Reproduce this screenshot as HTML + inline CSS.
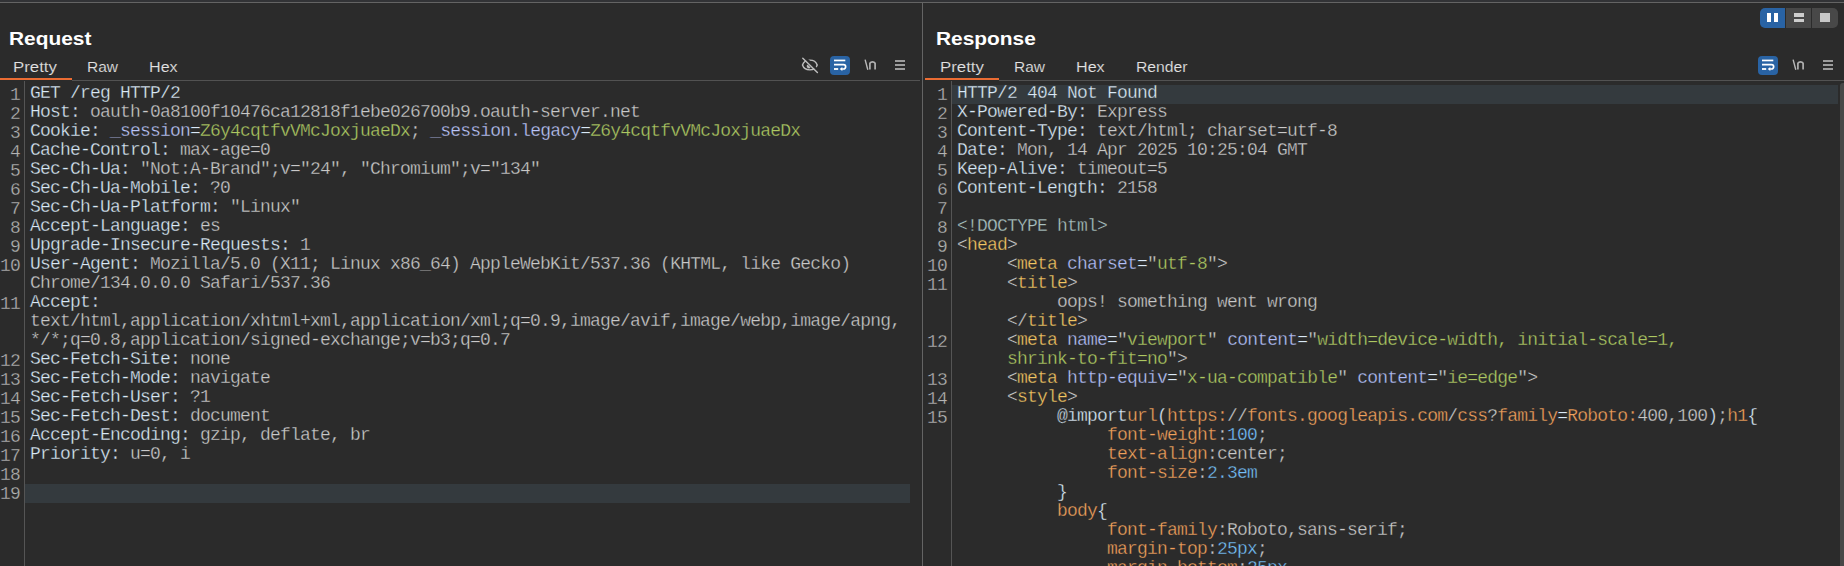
<!DOCTYPE html>
<html><head><meta charset="utf-8">
<style>
html,body{margin:0;padding:0;}
body{width:1844px;height:566px;overflow:hidden;background:#2b2b2b;position:relative;font-family:"Liberation Sans",sans-serif;}
.abs{position:absolute;}
#topstrip{left:0;top:0;width:1844px;height:2px;background:#323336;}
#topline{left:0;top:2px;width:1844px;height:1px;background:#646464;}
#vdiv{left:922px;top:2px;width:1px;height:564px;background:#646464;}
.title{font-weight:bold;font-size:18px;color:#fff;white-space:nowrap;line-height:20px;transform-origin:0 0;transform:scaleX(1.16);}
.tab{font-size:15.5px;color:#e2e2e2;-webkit-text-stroke:0.15px #2b2b2b;white-space:nowrap;line-height:18px;transform-origin:0 0;}
.hl{position:absolute;background:#343a3e;height:19px;}
.hline{position:absolute;height:1px;background:#525252;}
.orange{position:absolute;height:2px;background:#ea6c33;}
.gut{position:absolute;width:1px;background:#555;}
.code{position:absolute;font-family:"Liberation Mono",monospace;font-size:18px;letter-spacing:-0.8px;line-height:19px;white-space:pre;color:#c9c9c9;-webkit-text-stroke:0.3px #2b2b2b;}
.ln{position:absolute;font-family:"Liberation Mono",monospace;font-size:18px;letter-spacing:-0.8px;line-height:19px;white-space:pre;color:#b4b4b4;text-align:right;-webkit-text-stroke:0.3px #2b2b2b;}
.k{color:#dae9f7;}
.ck{color:#bcc6fa;}
.cv{color:#adc862;}
.p{color:#a9c1c0;}
.tg{color:#f2c562;}
.at{color:#b4c0fa;}
.eq{color:#dae9f7;}
.sv{color:#adc862;}
.or{color:#f0a05c;}
.nm{color:#74bff8;}
.lb{color:#dae9f7;}
</style></head><body>
<div class="abs" id="topstrip"></div>
<div class="abs" id="topline"></div>
<div class="abs" id="vdiv"></div>

<!-- Request panel -->
<div class="abs title" style="left:9px;top:29px;">Request</div>
<div class="abs tab" style="left:13px;top:58px;transform:scaleX(1.086);">Pretty</div>
<div class="abs tab" style="left:87px;top:58px;transform:scaleX(1.0);">Raw</div>
<div class="abs tab" style="left:149px;top:58px;transform:scaleX(1.04);">Hex</div>
<div class="orange" style="left:0;top:78px;width:72px;"></div>
<div class="hline" style="left:72px;top:80px;width:848px;"></div>
<div class="gut" style="left:24px;top:81px;height:485px;"></div>
<div class="hl" style="left:25px;top:484px;width:885px;"></div>
<div class="ln" style="left:0;top:86px;width:20px;">1
2
3
4
5
6
7
8
9
10

11


12
13
14
15
16
17
18
19</div>
<div class="code" style="left:30px;top:84px;"><span class="k">GET /reg HTTP/2</span>
<span class="k">Host:</span> oauth-0a8100f10476ca12818f1ebe026700b9.oauth-server.net
<span class="k">Cookie:</span> <span class="ck">_session</span><span class="k">=</span><span class="cv">Z6y4cqtfvVMcJoxjuaeDx</span>; <span class="ck">_session.legacy</span><span class="k">=</span><span class="cv">Z6y4cqtfvVMcJoxjuaeDx</span>
<span class="k">Cache-Control:</span> max-age=0
<span class="k">Sec-Ch-Ua:</span> "Not:A-Brand";v="24", "Chromium";v="134"
<span class="k">Sec-Ch-Ua-Mobile:</span> ?0
<span class="k">Sec-Ch-Ua-Platform:</span> "Linux"
<span class="k">Accept-Language:</span> es
<span class="k">Upgrade-Insecure-Requests:</span> 1
<span class="k">User-Agent:</span> Mozilla/5.0 (X11; Linux x86_64) AppleWebKit/537.36 (KHTML, like Gecko)
Chrome/134.0.0.0 Safari/537.36
<span class="k">Accept:</span>
text/html,application/xhtml+xml,application/xml;q=0.9,image/avif,image/webp,image/apng,
*/*;q=0.8,application/signed-exchange;v=b3;q=0.7
<span class="k">Sec-Fetch-Site:</span> none
<span class="k">Sec-Fetch-Mode:</span> navigate
<span class="k">Sec-Fetch-User:</span> ?1
<span class="k">Sec-Fetch-Dest:</span> document
<span class="k">Accept-Encoding:</span> gzip, deflate, br
<span class="k">Priority:</span> u=0, i
</div>

<!-- Response panel -->
<div class="abs title" style="left:936px;top:29px;">Response</div>
<div class="abs tab" style="left:940px;top:58px;transform:scaleX(1.086);">Pretty</div>
<div class="abs tab" style="left:1014px;top:58px;transform:scaleX(1.0);">Raw</div>
<div class="abs tab" style="left:1076px;top:58px;transform:scaleX(1.04);">Hex</div>
<div class="abs tab" style="left:1136px;top:58px;transform:scaleX(1.015);">Render</div>
<div class="orange" style="left:925px;top:78px;width:74px;"></div>
<div class="hline" style="left:999px;top:80px;width:845px;"></div>
<div class="gut" style="left:951px;top:81px;height:485px;"></div>
<div class="hl" style="left:952px;top:85px;width:886px;"></div>
<div class="ln" style="left:923px;top:86px;width:24px;">1
2
3
4
5
6
7
8
9
10
11


12

13
14
15</div>
<div class="code" style="left:957px;top:84px;"><span class="k" style="-webkit-text-stroke-color:#343a3e">HTTP/2 404 Not Found</span>
<span class="k">X-Powered-By:</span> Express
<span class="k">Content-Type:</span> text/html; charset=utf-8
<span class="k">Date:</span> Mon, 14 Apr 2025 10:25:04 GMT
<span class="k">Keep-Alive:</span> timeout=5
<span class="k">Content-Length:</span> 2158

<span class="p">&lt;!DOCTYPE html&gt;</span>
&lt;<span class="tg">head</span>&gt;
     &lt;<span class="tg">meta</span> <span class="at">charset</span><span class="eq">=</span>"<span class="sv">utf-8</span>"&gt;
     &lt;<span class="tg">title</span>&gt;
          oops! something went wrong
     &lt;/<span class="tg">title</span>&gt;
     &lt;<span class="tg">meta</span> <span class="at">name</span><span class="eq">=</span>"<span class="sv">viewport</span>" <span class="at">content</span><span class="eq">=</span>"<span class="sv">width=device-width, initial-scale=1,</span>
     <span class="sv">shrink-to-fit=no</span>"&gt;
     &lt;<span class="tg">meta</span> <span class="at">http-equiv</span><span class="eq">=</span>"<span class="sv">x-ua-compatible</span>" <span class="at">content</span><span class="eq">=</span>"<span class="sv">ie=edge</span>"&gt;
     &lt;<span class="tg">style</span>&gt;
          <span class="lb">@import</span><span class="or">url</span><span class="lb">(</span><span class="or">https:</span>//<span class="or">fonts.googleapis.com</span>/<span class="or">css</span>?<span class="or">family</span><span class="lb">=</span><span class="or">Roboto:</span>400,100<span class="lb">)</span>;<span class="or">h1</span><span class="lb">{</span>
               <span class="or">font-weight</span>:<span class="nm">100</span>;
               <span class="or">text-align</span>:center;
               <span class="or">font-size</span>:<span class="nm">2.3em</span>
          <span class="lb">}</span>
          <span class="or">body</span><span class="lb">{</span>
               <span class="or">font-family</span>:Roboto,sans-serif;
               <span class="or">margin-top</span>:<span class="nm">25px</span>;
               <span class="or">margin-bottom</span>:<span class="nm">25px</span>
</div>
<div class="abs" style="left:1840px;top:83px;width:4px;height:483px;background:#474747;border-radius:3px 0 0 0;"></div>

<svg class="abs" style="left:800px;top:56px;" width="20" height="20" viewBox="0 0 20 20">
<path d="M2.5 9 C4.6 2.5 15 2.5 17.2 9 C15 15.5 4.6 15.5 2.5 9 Z" fill="none" stroke="#bdbdbd" stroke-width="1.45"/>
<line x1="3.2" y1="0" x2="20.5" y2="17.1" stroke="#2b2b2b" stroke-width="2.6"/>
<path d="M10.6 11.6 A2.2 2.2 0 1 1 7.5 8.5 Z" fill="#bdbdbd"/>
<line x1="2.8" y1="2.2" x2="17.4" y2="16.6" stroke="#bdbdbd" stroke-width="1.45" stroke-linecap="round"/>
</svg>
<svg class="abs" style="left:830px;top:56px;" width="20" height="19" viewBox="0 0 20 19">
<rect x="0" y="0" width="20" height="19" rx="4" fill="#2963a4"/>
<rect x="4" y="3.6" width="11.3" height="1.7" fill="#fff"/>
<path d="M4 8.7 H13.5 A2.15 2.15 0 0 1 13.5 13 H11.5" fill="none" stroke="#fff" stroke-width="1.7"/>
<path d="M9.7 13 L12.3 10.9 L12.3 15.1 Z" fill="#fff"/>
<rect x="4" y="12.1" width="4.2" height="1.8" fill="#fff"/>
</svg>
<svg class="abs" style="left:864px;top:56px;" width="14" height="16" viewBox="0 0 14 16">
<line x1="1.1" y1="3.6" x2="3.8" y2="13.8" stroke="#b8b8b8" stroke-width="1.4"/>
<path d="M5.9 13.6 V7.3 A3 2.8 0 0 1 11.1 7.3 V13.6" fill="none" stroke="#b0b0b0" stroke-width="1.7"/>
</svg>
<div class="abs" style="left:895px;top:60px;width:10px;height:2px;background:#9c9c9c;"></div>
<div class="abs" style="left:895px;top:64px;width:10px;height:2px;background:#9c9c9c;"></div>
<div class="abs" style="left:895px;top:68px;width:10px;height:2px;background:#9c9c9c;"></div>
<svg class="abs" style="left:1758px;top:56px;" width="20" height="19" viewBox="0 0 20 19">
<rect x="0" y="0" width="20" height="19" rx="4" fill="#2963a4"/>
<rect x="4" y="3.6" width="11.3" height="1.7" fill="#fff"/>
<path d="M4 8.7 H13.5 A2.15 2.15 0 0 1 13.5 13 H11.5" fill="none" stroke="#fff" stroke-width="1.7"/>
<path d="M9.7 13 L12.3 10.9 L12.3 15.1 Z" fill="#fff"/>
<rect x="4" y="12.1" width="4.2" height="1.8" fill="#fff"/>
</svg>
<svg class="abs" style="left:1792px;top:56px;" width="14" height="16" viewBox="0 0 14 16">
<line x1="1.1" y1="3.6" x2="3.8" y2="13.8" stroke="#b8b8b8" stroke-width="1.4"/>
<path d="M5.9 13.6 V7.3 A3 2.8 0 0 1 11.1 7.3 V13.6" fill="none" stroke="#b0b0b0" stroke-width="1.7"/>
</svg>
<div class="abs" style="left:1823px;top:60px;width:10px;height:2px;background:#9c9c9c;"></div>
<div class="abs" style="left:1823px;top:64px;width:10px;height:2px;background:#9c9c9c;"></div>
<div class="abs" style="left:1823px;top:68px;width:10px;height:2px;background:#9c9c9c;"></div>
<div class="abs" style="left:1760px;top:8px;width:78px;height:20px;border-radius:5px;overflow:hidden;background:#2b2b2b;">
<div class="abs" style="left:0;top:0;width:25px;height:20px;background:#2963a4;"></div>
<div class="abs" style="left:26px;top:0;width:25px;height:20px;background:#484848;"></div>
<div class="abs" style="left:52px;top:0;width:26px;height:20px;background:#484848;"></div>
<div class="abs" style="left:7px;top:5px;width:4px;height:9px;background:#fff;"></div>
<div class="abs" style="left:14px;top:5px;width:4px;height:9px;background:#fff;"></div>
<div class="abs" style="left:34px;top:5px;width:10px;height:4px;background:#cdcdcd;"></div>
<div class="abs" style="left:34px;top:11px;width:10px;height:3px;background:#cdcdcd;"></div>
<div class="abs" style="left:60px;top:5px;width:10px;height:9px;background:#c8c8c8;"></div>
</div>
</body></html>
